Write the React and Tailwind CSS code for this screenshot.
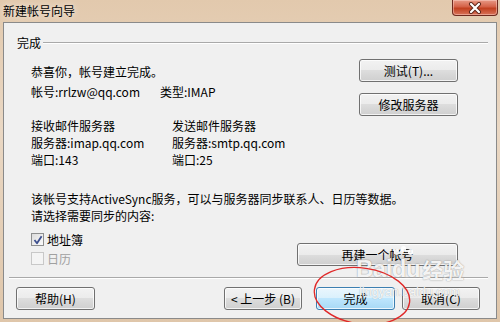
import React from "react";

function Btn({ children, className = "", primary = false }) {
  return (
    <div
      className={
        (primary
          ? "border-[#3c7fb1] bg-[linear-gradient(to_bottom,#eaf6fd_0%,#d9f0fc_50%,#bee6fd_50%,#a7d9f5_100%)] "
          : "border-[#707070] bg-[linear-gradient(to_bottom,#f2f2f2_0%,#ebebeb_50%,#dddddd_50%,#cfcfcf_100%)] ") +
        "flex items-center justify-center h-[23px] rounded-[3px] border text-[12px] leading-none text-black shadow-[inset_0_0_0_1px_rgba(255,255,255,0.75)] " +
        className
      }
    >
      {children}
    </div>
  );
}

function Check({ checked, disabled }) {
  return (
    <div
      className={
        (disabled
          ? "border-[#c8c8c8] bg-[#f4f4f4] "
          : "border-[#8e8f8f] bg-[linear-gradient(135deg,#dcdcdc,#fbfbfb)] ") +
        "w-[13px] h-[13px] border flex items-center justify-center"
      }
    >
      {checked && (
        <svg width="10" height="10" viewBox="0 0 10 10">
          <path d="M1.5 5 L4 8.2 L8.6 1.2" fill="none" stroke="#3d4f8e" strokeWidth="1.8" strokeLinejoin="round" />
        </svg>
      )}
    </div>
  );
}

export default function App() {
  return (
    <div className="relative w-[500px] h-[322px] overflow-hidden bg-[linear-gradient(to_bottom,#e2c9ad,#ead8c4_40%,#dfc6aa)] font-['Noto_Sans_CJK_SC','Noto_Sans',sans-serif] text-[12px] text-black flex flex-col">
      {/* title bar */}
      <div className="h-[22px] flex items-center pl-[3px] shrink-0">
        <span className="leading-none text-[12px] text-black [text-shadow:0_0_6px_rgba(255,255,255,0.9)]">新建帐号向导</span>
      </div>
      <div className="absolute top-0 left-[452px] w-[46px] h-[16px] rounded-b-[4px] border border-t-0 border-[#6e2a1e] bg-[linear-gradient(to_bottom,#e79a86,#d46147_45%,#c1401f_55%,#d8735a)] flex items-center justify-center shadow-[inset_0_0_0_1px_rgba(255,220,210,0.45)]">
        <svg width="14" height="12" viewBox="0 0 14 12">
          <path d="M3 2 L11 10 M11 2 L3 10" stroke="#5a2418" strokeWidth="4" strokeLinecap="round" />
          <path d="M3 2 L11 10 M11 2 L3 10" stroke="#ffffff" strokeWidth="2.2" strokeLinecap="round" />
        </svg>
      </div>

      {/* client area */}
      <div className="mx-[3px] h-[297px] border border-[#8a8a8a] bg-[#f0f0f0] flex flex-col shrink-0">
        {/* header */}
        <div className="mt-[12px] ml-[13px] mr-[8px] h-[16px] flex items-center">
          <span className="leading-[16px]">完成</span>
          <div className="ml-[2px] flex-1 h-[2px] border-t border-t-[#a9a9a9] border-b border-b-white" />
        </div>

        {/* body */}
        <div className="flex-1 pl-[27px] pr-[38px] flex flex-col">
          <div className="flex h-[66px]">
            <div className="flex-1 flex flex-col pt-[13px] leading-[16px]">
              <div>恭喜你，帐号建立完成。</div>
              <div className="mt-[4px] flex">
                <span className="w-[129px]">帐号:rrlzw@qq.com</span>
                <span>类型:IMAP</span>
              </div>
            </div>
            <div className="flex flex-col pt-[8px] gap-[11px]">
              <Btn className="w-[99px]">测试(T)...</Btn>
              <Btn className="w-[99px]">修改服务器</Btn>
            </div>
          </div>

          <div className="flex leading-[17px]">
            <div className="w-[141px] flex flex-col">
              <div>接收邮件服务器</div>
              <div>服务器:imap.qq.com</div>
              <div>端口:143</div>
            </div>
            <div className="flex flex-col">
              <div>发送邮件服务器</div>
              <div>服务器:smtp.qq.com</div>
              <div>端口:25</div>
            </div>
          </div>

          <div className="mt-[22px] flex flex-col leading-[17px]">
            <div>该帐号支持ActiveSync服务，可以与服务器同步联系人、日历等数据。</div>
            <div>请选择需要同步的内容:</div>
          </div>

          <div className="mt-[7px] flex">
            <div className="flex flex-col gap-[2px]">
              <div className="h-[17px] flex items-center gap-[3px]">
                <Check checked />
                <span className="leading-[17px]">地址簿</span>
              </div>
              <div className="h-[17px] flex items-center gap-[3px]">
                <Check disabled />
                <span className="leading-[17px] text-[#a0a0a0]">日历</span>
              </div>
            </div>
            <div className="ml-auto pt-[12px]">
              <Btn className="w-[161px]">再建一个帐号</Btn>
            </div>
          </div>
        </div>

        {/* footer */}
        <div className="ml-[5px] mr-[8px] h-[2px] border-t border-t-[#a9a9a9] border-b border-b-white" />
        <div className="mt-[8px] mb-[8px] flex pl-[12px] pr-[16px]">
          <Btn className="w-[79px]">帮助(H)</Btn>
          <div className="flex-1" />
          <Btn className="w-[78px]">&lt; 上一步 (B)</Btn>
          <Btn primary className="ml-[14px] w-[79px]">完成</Btn>
          <Btn className="ml-[7px] w-[78px]">取消(C)</Btn>
        </div>
      </div>

      {/* watermark */}
      <div className="absolute left-[356px] top-[256px] flex items-end text-white/90 [text-shadow:0_0_1px_rgba(0,0,0,0.35),0_0_2px_rgba(0,0,0,0.15)] pointer-events-none">
        <span className="font-['Liberation_Sans',sans-serif] font-bold text-[24px] leading-[26px] tracking-[-0.5px]">Bai</span>
        <span className="relative font-['Liberation_Sans',sans-serif] font-bold text-[24px] leading-[26px] tracking-[-0.5px]">
          du
          <span className="absolute left-[2px] -top-[7px] w-[5px] h-[6px] rounded-full bg-white/90" />
          <span className="absolute left-[9px] -top-[10px] w-[5px] h-[6px] rounded-full bg-white/90" />
          <span className="absolute left-[16px] -top-[7px] w-[5px] h-[6px] rounded-full bg-white/90" />
        </span>
        <span className="ml-[2px] font-bold text-[21px] leading-[26px]">经验</span>
      </div>
      <div className="absolute left-[359px] top-[285px] text-white/90 font-['Liberation_Sans',sans-serif] text-[12.5px] leading-[14px] [text-shadow:0_0_1px_rgba(0,0,0,0.35)] pointer-events-none">
        jingyan.baidu.com
      </div>

      {/* red ellipse annotation */}
      <svg className="absolute inset-0 pointer-events-none" width="500" height="322" viewBox="0 0 500 322">
        <ellipse cx="362" cy="296" rx="48" ry="28" transform="rotate(8 362 296)" fill="none" stroke="#e02828" strokeWidth="1.3" />
      </svg>
    </div>
  );
}
